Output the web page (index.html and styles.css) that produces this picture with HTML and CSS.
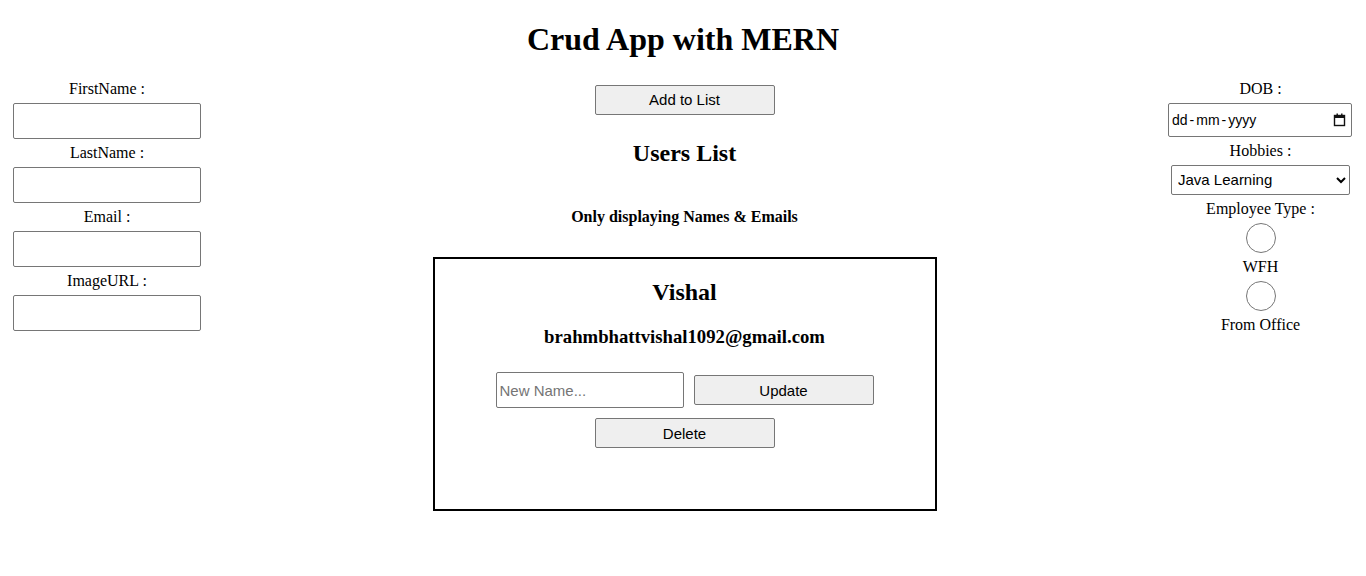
FILE: index.html
```html
<!DOCTYPE html>
<html lang="en">
<head>
<meta charset="utf-8">
<title>Crud App with MERN</title>
<link rel="stylesheet" href="styles.css">
</head>
<body>
<div class="app">
  <h1 class="title">Crud App with MERN</h1>
  <div class="layout">
    <div class="col col-left">
      <label class="field-label" for="fn">FirstName :</label>
      <input class="text-input" id="fn" type="text">
      <label class="field-label" for="ln">LastName :</label>
      <input class="text-input" id="ln" type="text">
      <label class="field-label" for="em">Email :</label>
      <input class="text-input" id="em" type="text">
      <label class="field-label" for="img">ImageURL :</label>
      <input class="text-input" id="img" type="text">
    </div>

    <div class="col-main">
      <button class="btn btn-block" type="button">Add to List</button>
      <h2 class="list-title">Users List</h2>
      <h4 class="list-note">Only displaying Names &amp; Emails</h4>
      <div class="card">
        <h2 class="card-name">Vishal</h2>
        <h3 class="card-email">brahmbhattvishal1092@gmail.com</h3>
        <div class="card-row">
          <input class="text-input" type="text" placeholder="New Name...">
          <button class="btn" type="button">Update</button>
        </div>
        <div class="card-row">
          <button class="btn" type="button">Delete</button>
        </div>
      </div>
    </div>

    <div class="col col-right">
      <span class="field-label">DOB :</span>
      <div class="date-input" role="textbox" aria-label="DOB" tabindex="0">
        <span class="date-fields">
          <span>dd</span><span>-</span><span>mm</span><span>-</span><span>yyyy</span>
        </span>
        <svg class="date-icon" width="15" height="15" viewBox="0 0 15 15" aria-hidden="true">
          <rect x="2.5" y="3.5" width="10" height="10" fill="none" stroke="#111" stroke-width="1.4"/>
          <rect x="2" y="3" width="11" height="3" fill="#111"/>
          <rect x="4.5" y="1.5" width="1.4" height="2" fill="#111"/>
          <rect x="9.1" y="1.5" width="1.4" height="2" fill="#111"/>
        </svg>
      </div>
      <label class="field-label" for="hob">Hobbies :</label>
      <select class="select-input" id="hob">
        <option>Java Learning</option>
        <option>Reading</option>
        <option>Gaming</option>
      </select>
      <span class="field-label">Employee Type :</span>
      <input class="radio-input" type="radio" name="etype" id="wfh">
      <label class="field-label" for="wfh">WFH</label>
      <input class="radio-input" type="radio" name="etype" id="office">
      <label class="field-label" for="office">From Office</label>
    </div>
  </div>
</div>
</body>
</html>
```

FILE: styles.css
```css
html, body {
  margin: 0;
  padding: 0;
  background: #ffffff;
}

body {
  font-family: "Liberation Serif", "Times New Roman", serif;
  font-size: 16px;
  color: #000000;
}

.app {
  padding: 0 8px;
  text-align: center;
}

.title {
  margin: 21px 0 21.5px;
  font-size: 32px;
  font-weight: bold;
  line-height: normal;
}

.layout {
  display: flex;
  justify-content: space-between;
  align-items: flex-start;
}

.col {
  display: flex;
  flex-direction: column;
  align-items: center;
}

.col-left {
  width: 198px;
}

.col-right {
  width: 195px;
}

.col-main {
  flex: 1;
  display: flex;
  flex-direction: column;
  align-items: center;
}

.field-label {
  display: block;
  line-height: normal;
}

.text-input {
  box-sizing: border-box;
  width: 188px;
  height: 36px;
  margin: 5px;
  padding: 0 3px;
  border: 1px solid #767676;
  border-radius: 2px;
  font-family: "Liberation Sans", Arial, sans-serif;
  font-size: 15px;
  color: #000000;
  background: #ffffff;
}

.text-input::placeholder {
  color: #757575;
}

.date-input {
  box-sizing: border-box;
  display: flex;
  align-items: center;
  justify-content: space-between;
  width: 184px;
  height: 34px;
  margin: 5px 6px 5px 5px;
  padding: 0 4px 0 3px;
  border: 1px solid #767676;
  border-radius: 2px;
  font-family: "Liberation Sans", Arial, sans-serif;
  font-size: 14px;
  color: #000000;
  background: #ffffff;
}

.date-fields {
  display: flex;
  gap: 2px;
}

.date-icon {
  display: block;
}

.select-input {
  box-sizing: border-box;
  width: 179px;
  height: 30px;
  margin: 5px;
  padding: 0 2px;
  border: 1px solid #767676;
  border-radius: 2px;
  font-family: "Liberation Sans", Arial, sans-serif;
  font-size: 15px;
  color: #000000;
  background: #ffffff;
}

.radio-input {
  width: 30px;
  height: 30px;
  margin: 5px;
}

.btn {
  box-sizing: border-box;
  width: 180px;
  height: 30px;
  margin: 5px;
  padding: 0;
  border: 1px solid #767676;
  border-radius: 2px;
  background: #efefef;
  font-family: "Liberation Sans", Arial, sans-serif;
  font-size: 15px;
  color: #000000;
}

.list-title {
  margin: 20px 0 0;
  font-size: 24px;
  line-height: normal;
}

.list-note {
  margin: 41px 0 0;
  font-size: 16px;
  line-height: normal;
}

.card {
  box-sizing: border-box;
  width: 504px;
  height: 254px;
  margin-top: 31px;
  border: 2px solid #000000;
}

.card-name {
  margin: 20px 0;
  font-size: 24px;
  line-height: normal;
}

.card-email {
  margin: 0 0 19.7px;
  font-size: 18.72px;
  line-height: normal;
}

.card-row {
  display: flex;
  justify-content: center;
  align-items: center;
}
```
